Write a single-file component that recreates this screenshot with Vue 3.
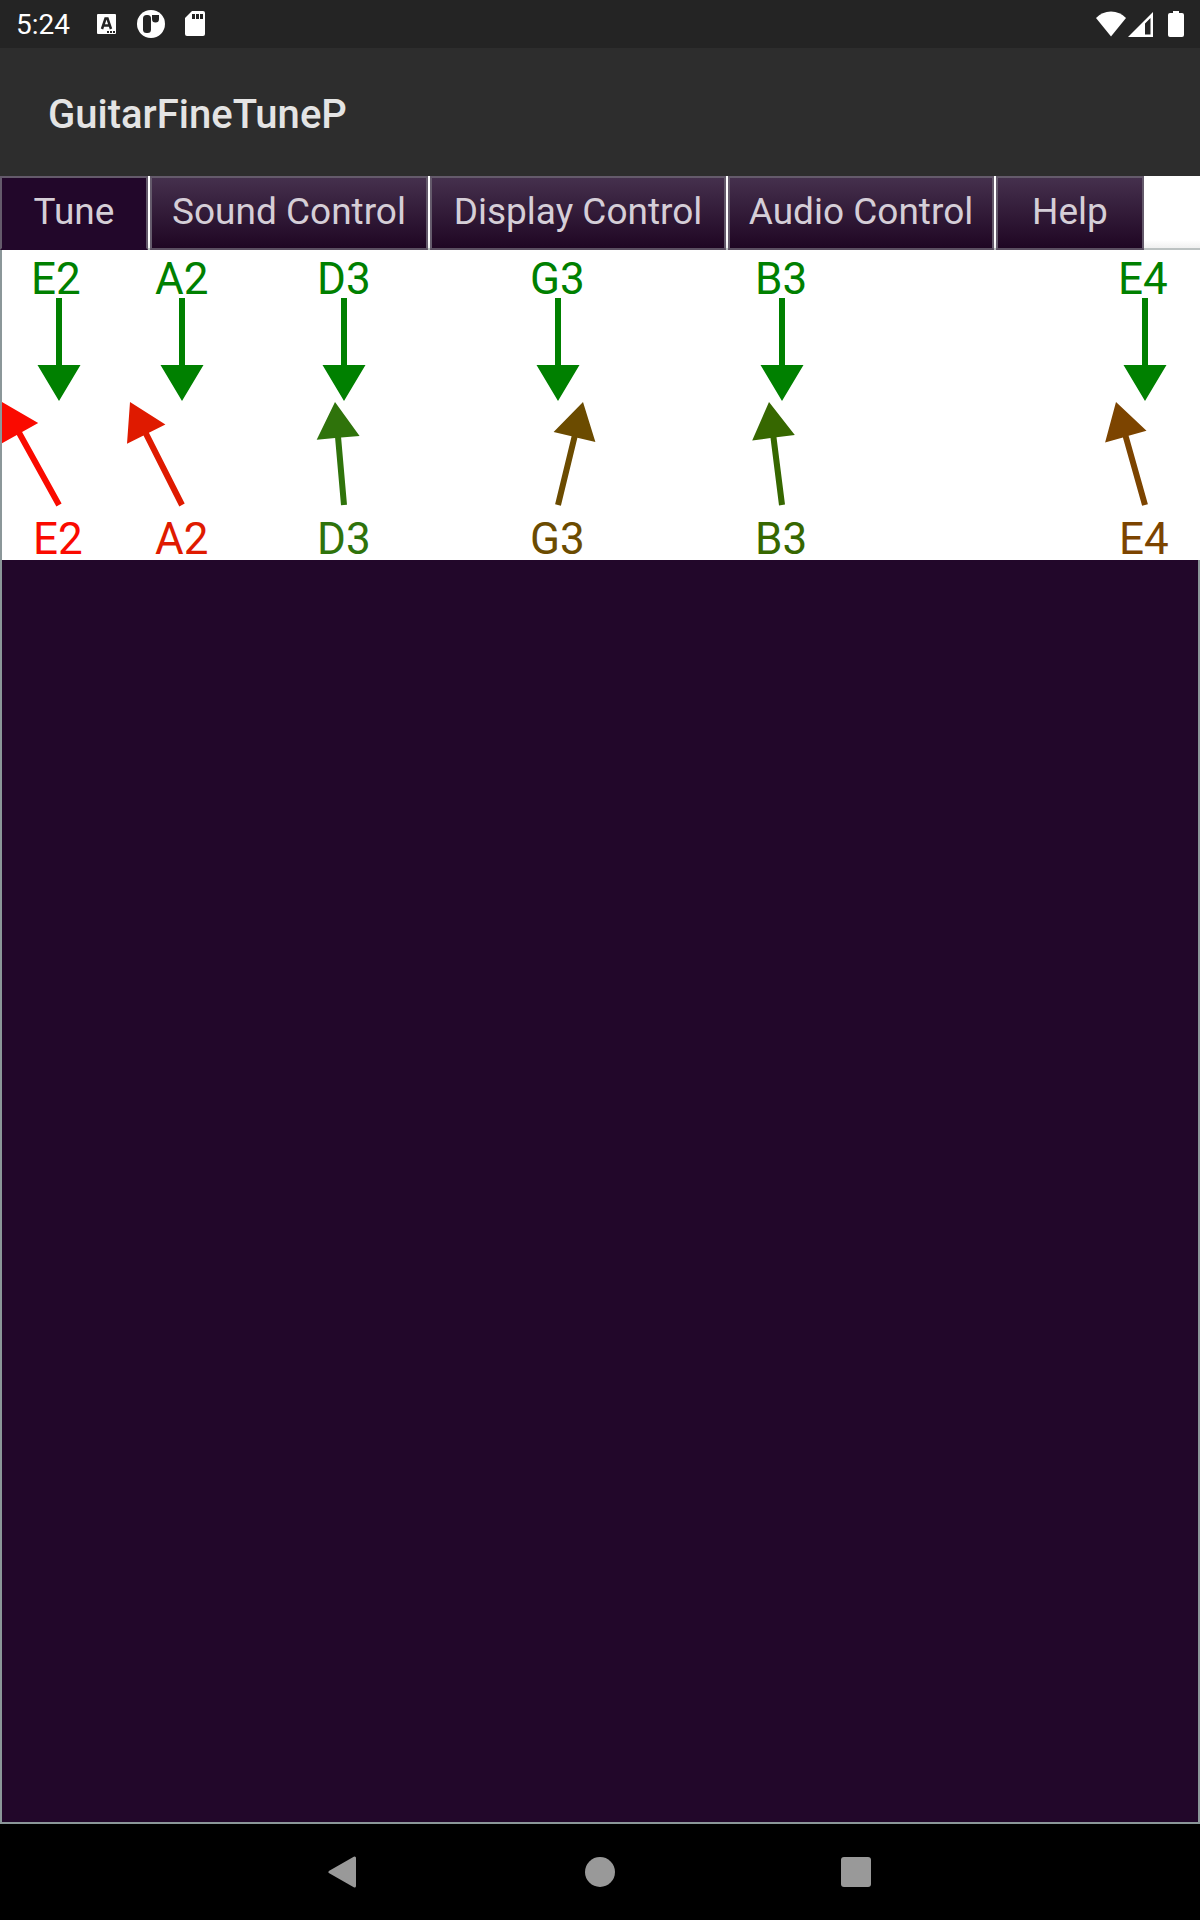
<script setup>
import { ref } from 'vue'

const tabs = [
  { title: 'Tune', width: 148 },
  { title: 'Sound Control', width: 278 },
  { title: 'Display Control', width: 296 },
  { title: 'Audio Control', width: 266 },
  { title: 'Help', width: 148 },
]
const active = ref('Tune')

// x: arrow axis, tip: where the measured arrow points, label/played: text starts
const strings = [
  { name: 'E2', x: 59, tip: 2, label: 31, played: 33, color: '#fa0a00' },
  { name: 'A2', x: 182, tip: 130, label: 155, played: 155, color: '#df1a00' },
  { name: 'D3', x: 344, tip: 335, label: 317, played: 317, color: '#2f730b' },
  { name: 'G3', x: 558, tip: 583, label: 530, played: 530, color: '#6b4b00' },
  { name: 'B3', x: 782, tip: 769, label: 755, played: 755, color: '#366700' },
  { name: 'E4', x: 1145, tip: 1116, label: 1118, played: 1119, color: '#7c4400' },
]

// Closed outline of an arrow from (x1, y1) to (x2, y2)
function arrow(x1, y1, x2, y2) {
  const len = Math.hypot(x2 - x1, y2 - y1)
  const ux = (x2 - x1) / len
  const uy = (y2 - y1) / len
  const at = (along, side) =>
    `${(x1 + ux * along - uy * side).toFixed(1)},${(y1 + uy * along + ux * side).toFixed(1)}`
  const neck = len - 36
  return [at(0, 3), at(neck, 3), at(neck, 21.5), at(len, 0), at(neck, -21.5), at(neck, -3), at(0, -3)].join(' ')
}
</script>

<template>
  <div class="screen">
    <header class="status">
      <time class="clock">5:24</time>
      <div class="notices">
        <svg width="20" height="20" viewBox="0 0 20 20" aria-hidden="true">
          <rect width="19" height="20" rx="1" fill="#fff" />
          <path d="M5 15 8.500 4.500h2L14 15M6.500 11.500h6" fill="none" stroke="#242424" stroke-width="2.500" />
          <path d="M10 17h2v2h-2zM13 17h2v2h-2zM16 17h2v2h-2z" fill="#242424" />
        </svg>
        <svg width="28" height="28" viewBox="0 0 28 28" aria-hidden="true">
          <circle cx="14" cy="14" r="14" fill="#fff" />
          <rect x="6" y="5" width="8" height="18" rx="3.500" fill="#242424" />
          <path d="M15 5h7v4a3.500 3.500 0 0 1-7 0z" fill="#242424" />
        </svg>
        <svg width="20" height="26" viewBox="0 0 20 26" aria-hidden="true">
          <path d="M7 0h11a2 2 0 0 1 2 2v21a2 2 0 0 1-2 2H2a2 2 0 0 1-2-2V7z" fill="#fff" />
          <path d="M7 3h3v5H7zM11 3h3v5h-3zM15 3h3v5h-3z" fill="#242424" />
        </svg>
      </div>
      <div class="signals">
        <svg width="30" height="26" viewBox="0 0 30 26" aria-hidden="true">
          <path d="M15 25.500 0 7Q6 .5 15 .5T30 7z" fill="#fff" />
        </svg>
        <svg class="cell" width="26" height="26" viewBox="0 0 26 26" aria-hidden="true">
          <path d="M25 1v25H0zM22.500 7 17 12.500V23.500h5.500z" fill="#fff" fill-rule="evenodd" />
        </svg>
        <svg width="16" height="26" viewBox="0 0 16 26" aria-hidden="true">
          <path d="M5 0h6v2h3a2 2 0 0 1 2 2v20a2 2 0 0 1-2 2H2a2 2 0 0 1-2-2V4a2 2 0 0 1 2-2h3z" fill="#fff" />
        </svg>
      </div>
    </header>

    <div class="appbar">
      <h1>GuitarFineTuneP</h1>
    </div>

    <div class="tabs" role="tablist">
      <button
        v-for="tab in tabs"
        :key="tab.title"
        type="button"
        role="tab"
        class="tab"
        :class="{ selected: tab.title === active }"
        :style="{ width: tab.width + 'px' }"
        :aria-selected="tab.title === active"
        @click="active = tab.title"
      >{{ tab.title }}</button>
    </div>

    <main class="panel">
      <svg class="tuner" viewBox="2 250 1198 330" role="img" aria-label="String tuning">
        <rect x="2" y="250" width="1198" height="310" fill="#fff" />
        <g v-for="s in strings" :key="s.name">
          <text :x="s.label" y="294" fill="#008000">{{ s.name }}</text>
          <polygon :points="arrow(s.x, 298, s.x, 401)" fill="#008000" />
          <polygon :points="arrow(s.x, 505, s.tip, 402)" :fill="s.color" />
          <text :x="s.played" y="554" :fill="s.color">{{ s.name }}</text>
        </g>
      </svg>
    </main>

    <nav class="navbar">
      <button type="button" aria-label="Back">
        <svg width="32" height="32" viewBox="0 0 32 32">
          <path d="M26.500 2v28L2 16z" fill="#999" stroke="#999" stroke-width="3" stroke-linejoin="round" />
        </svg>
      </button>
      <button type="button" aria-label="Home">
        <svg width="32" height="32" viewBox="0 0 32 32"><circle cx="16" cy="16" r="15" fill="#999" /></svg>
      </button>
      <button type="button" aria-label="Recent apps">
        <svg width="32" height="32" viewBox="0 0 32 32"><rect x="1" y="1" width="30" height="30" rx="3" fill="#999" /></svg>
      </button>
    </nav>
  </div>
</template>

<style>
body {
  margin: 0;
}
</style>

<style scoped>
.screen {
  display: flex;
  flex-direction: column;
  min-height: 100vh;
  background: #fff;
  font-family: Roboto, "Liberation Sans", sans-serif;
}

svg {
  display: block;
}

.status {
  display: flex;
  align-items: center;
  height: 48px;
  padding: 0 16px;
  background: #242424;
  color: #fff;
}

.clock {
  padding-top: 2px;
  font-size: 28px;
  line-height: 32px;
}

.notices {
  display: flex;
  align-items: center;
  gap: 20px;
  margin-left: 27px;
}

.signals {
  display: flex;
  align-items: center;
  margin-left: auto;
}

.cell {
  margin: 0 14px 0 2px;
}

.appbar {
  display: flex;
  align-items: center;
  box-sizing: border-box;
  height: 128px;
  padding: 6px 48px 0;
  background: #2d2d2d;
}

h1 {
  margin: 0;
  font-size: 40px;
  font-weight: 500;
  line-height: 48px;
  color: #e4e4e4;
}

.tabs {
  display: flex;
  gap: 2px;
  height: 74px;
  background: linear-gradient(#fff 64px, #f0f0f0 72px, #bcc2c2 72px);
}

.tab {
  box-sizing: border-box;
  padding: 0 0 2px;
  border: 2px solid #645a6b;
  border-bottom-color: #5b4f61;
  background: linear-gradient(#45304d, #1f0623) padding-box;
  font-family: inherit;
  font-size: 37px;
  line-height: 42px;
  color: #d5ced7;
  white-space: nowrap;
}

.tab.selected {
  border-bottom-color: #22072a;
  background: #22072a;
}

.panel {
  flex: 1;
  border: solid #8b9799;
  border-width: 0 2px 2px;
  background: #22072a;
}

.tuner {
  width: calc(100% + 2px);
  height: auto;
  font-size: 44px;
}

.navbar {
  display: flex;
  justify-content: center;
  gap: 96px;
  height: 96px;
  background: #000;
}

.navbar button {
  display: flex;
  align-items: center;
  justify-content: center;
  width: 160px;
  padding: 0;
  border: 0;
  background: none;
}
</style>
